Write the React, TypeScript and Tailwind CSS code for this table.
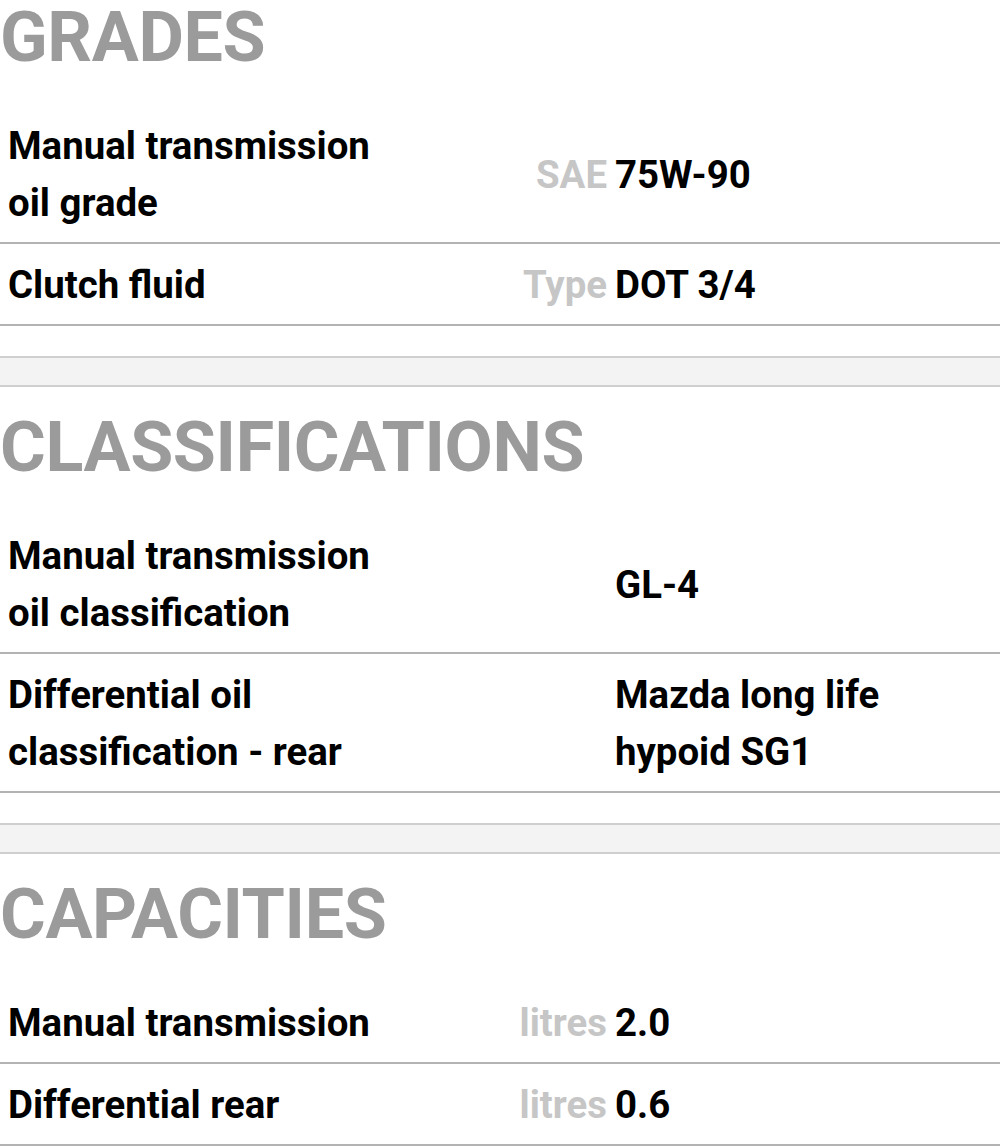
import React from "react";

type Row = { label: string[]; unit?: string; value: string[] };
type Section = { title: string; rows: Row[] };

const sections: Section[] = [
  {
    title: "GRADES",
    rows: [
      { label: ["Manual transmission", "oil grade"], unit: "SAE", value: ["75W-90"] },
      { label: ["Clutch fluid"], unit: "Type", value: ["DOT 3/4"] },
    ],
  },
  {
    title: "CLASSIFICATIONS",
    rows: [
      { label: ["Manual transmission", "oil classification"], value: ["GL-4"] },
      { label: ["Differential oil", "classification - rear"], value: ["Mazda long life", "hypoid SG1"] },
    ],
  },
  {
    title: "CAPACITIES",
    rows: [
      { label: ["Manual transmission"], unit: "litres", value: ["2.0"] },
      { label: ["Differential rear"], unit: "litres", value: ["0.6"] },
    ],
  },
];

function SpecRow({ row }: { row: Row }) {
  return (
    <div className="flex items-center border-b-2 border-[#b3b3b3] pt-[12px] pb-[11px] text-[38.4px] leading-[57px] font-bold">
      <div className="w-[480px] pl-[8px] text-black">
        {row.label.map((l, i) => (
          <div key={i}>{l}</div>
        ))}
      </div>
      <div className="w-[135px] pr-[8px] text-right text-[#c6c6c6]">{row.unit ?? ""}</div>
      <div className="flex-1 text-black">
        {row.value.map((v, i) => (
          <div key={i}>{v}</div>
        ))}
      </div>
    </div>
  );
}

export default function App() {
  return (
    <div className="w-[1000px] h-[1146px] overflow-hidden bg-white font-['Roboto',sans-serif]">
      <div className="-mt-[23px]">
        {sections.map((s, idx) => (
          <div key={s.title}>
            <h2 className="pt-[18px] pb-[26px] text-[70px] leading-[84px] tracking-[-0.4px] font-bold text-[#9b9b9b]">
              {s.title}
            </h2>
            {s.rows.map((r, i) => (
              <SpecRow key={i} row={r} />
            ))}
            {idx < sections.length - 1 && (
              <>
                <div className="h-[30px] bg-white" />
                <div className="h-[31px] border-y-2 border-[#cfcfcf] bg-[#f3f3f3]" />
              </>
            )}
          </div>
        ))}
      </div>
    </div>
  );
}
